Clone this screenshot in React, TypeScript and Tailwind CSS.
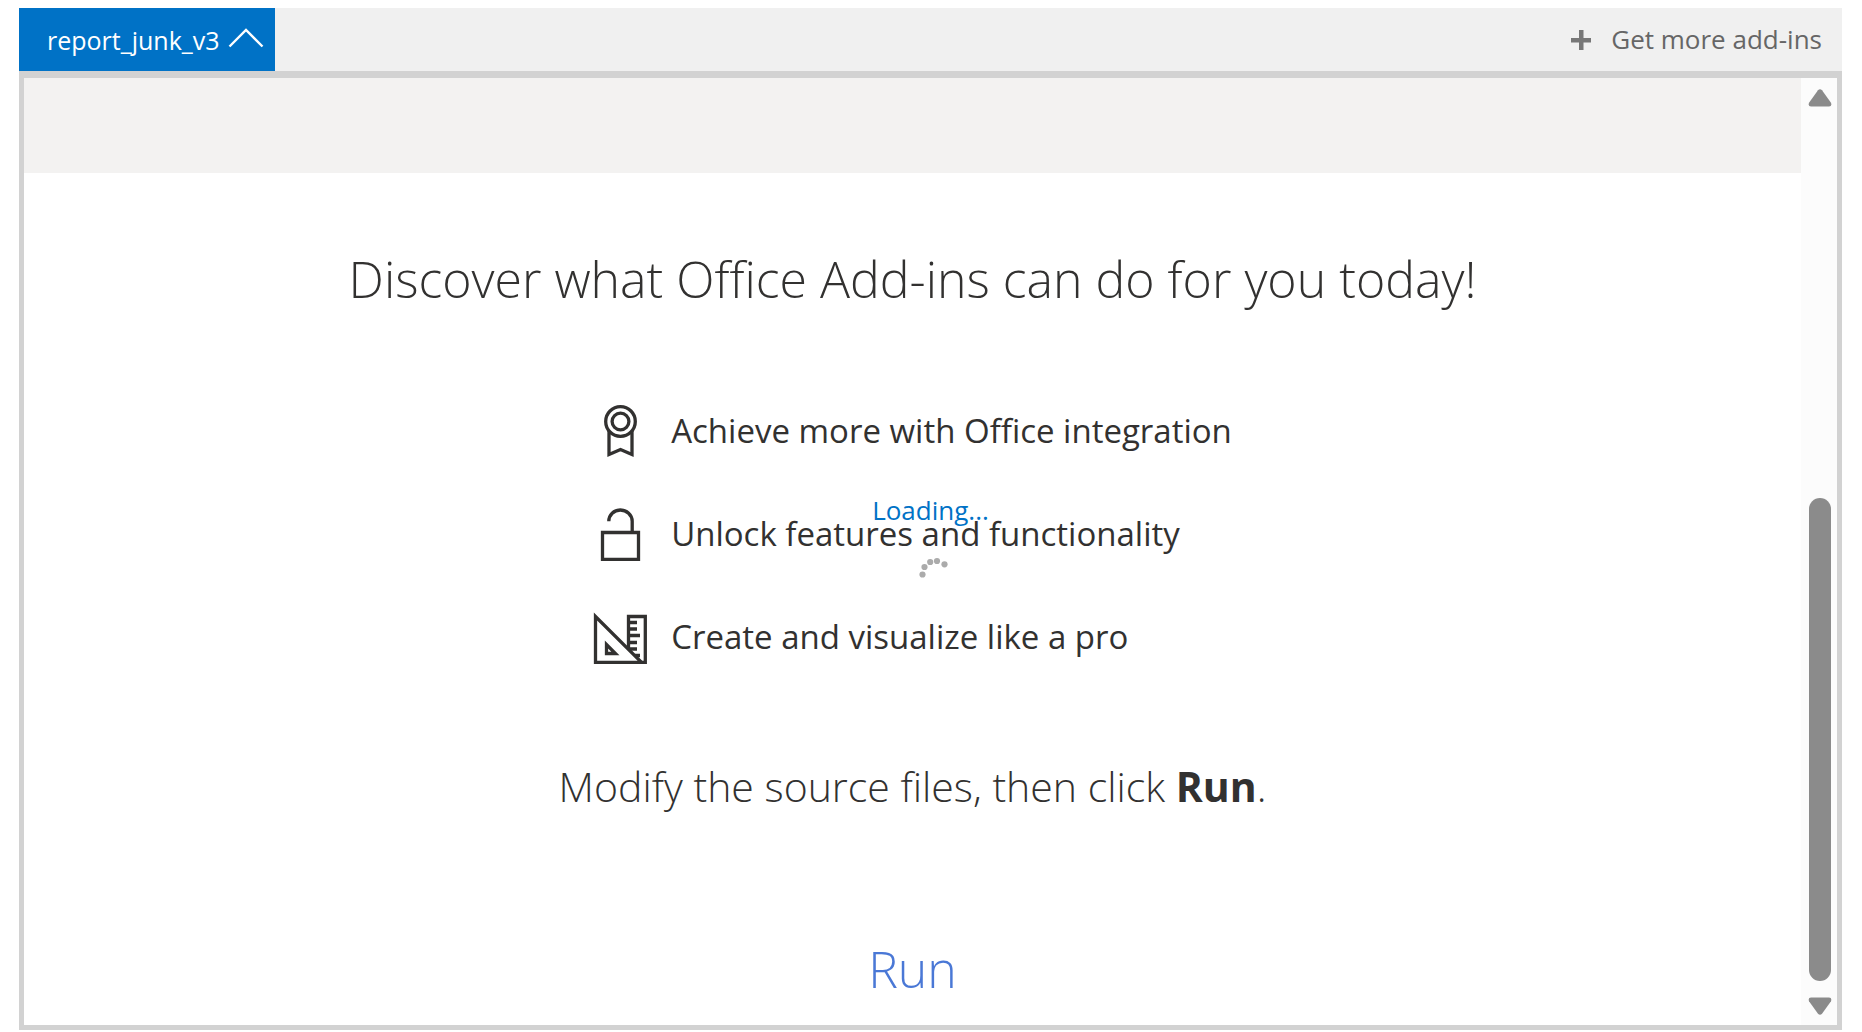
import type { ReactNode } from 'react';

const ICON_PROPS = {
  viewBox: '0 0 54 54',
  className: 'h-[54px] w-[54px] flex-shrink-0',
  fill: 'none',
  stroke: '#323130',
  strokeWidth: 3.3,
  'aria-hidden': true,
} as const;

function RibbonIcon() {
  return (
    <svg {...ICON_PROPS}>
      <circle cx="27.5" cy="17.5" r="14.8" />
      <circle cx="27.5" cy="17.5" r="8.4" />
      <path d="M16 27V50.5L27.5 45.5L39 50.5V27" />
    </svg>
  );
}

function UnlockIcon() {
  return (
    <svg {...ICON_PROPS}>
      <path d="M9.5 25.5H45.5V52.3H9.5Z" />
      <path d="M15.8 14.3C15.8 8 21 3 27.3 3S39.2 8 39.2 14.3V25" />
    </svg>
  );
}

function DesignIcon() {
  return (
    <svg {...ICON_PROPS}>
      <path d="M2.5 6.5V52.3H48.5Z" />
      <path d="M13.5 34.5V43.5H22.5Z" />
      <path d="M35.5 39V6.5H52.3V52.3H47" />
      <path d="M36 12.5H44M36 19H44M36 25.5H47M36 32.5H44M37 39H44M42 45.5H47" />
    </svg>
  );
}

const FEATURES: { icon: () => ReactNode; text: string }[] = [
  { icon: RibbonIcon, text: 'Achieve more with Office integration' },
  { icon: UnlockIcon, text: 'Unlock features and functionality' },
  { icon: DesignIcon, text: 'Create and visualize like a pro' },
];

function ScrollArrow({ label, down = false }: { label: string; down?: boolean }) {
  return (
    <button type="button" aria-label={label}>
      <svg viewBox="0 0 24 18" className={down ? 'h-[18px] w-6 rotate-180' : 'h-[18px] w-6'} aria-hidden="true">
        <path d="M10 1.2Q12 -0.8 14 1.2L23 13.8Q24.2 17.4 21 17.6H3Q-0.2 17.4 1 13.8Z" fill="#8b8b8b" />
      </svg>
    </button>
  );
}

function Loading() {
  return (
    <div role="status" className="pointer-events-none absolute inset-x-0 top-[416px] flex flex-col items-center">
      <span className="text-[26px] leading-8 text-[#0072c6]">Loading...</span>
      <svg viewBox="0 0 40 40" className="mt-[22px] h-10 w-10" fill="#ababab" aria-hidden="true">
        <circle cx="11.5" cy="26.5" r="3.1" />
        <circle cx="13.5" cy="19" r="3.1" />
        <circle cx="19.2" cy="14" r="3.1" />
        <circle cx="26" cy="13" r="3.1" />
        <circle cx="33.5" cy="16.3" r="3.1" />
      </svg>
    </div>
  );
}

export default function App() {
  return (
    <div className="flex min-h-screen flex-col bg-white px-5 pt-2 pb-0.5 pl-[19px] font-['Segoe_UI','Open_Sans',sans-serif] text-[#323130]">
      <header className="flex h-[63px] items-stretch justify-between bg-[#f0f0f0]">
        <button type="button" className="flex items-center gap-2 bg-[#0072c6] pr-[11px] pl-7 text-[25px] leading-8 text-white">
          report_junk_v3
          <svg viewBox="0 0 36 20" className="mb-1 h-5 w-9" fill="none" stroke="currentColor" strokeWidth="2.4" aria-hidden="true">
            <path d="M1.5 18.5L18 2L34.5 18.5" />
          </svg>
        </button>
        <a href="#" className="flex items-center gap-5 pr-5 text-[26px] leading-8 text-[#666666]">
          <svg viewBox="0 0 20 20" className="h-5 w-5" fill="#777777" aria-hidden="true">
            <path d="M8 0H12.5V8H20V12.5H12.5V20H8V12.5H0V8H8Z" />
          </svg>
          <span className="pb-0.5">Get more add-ins</span>
        </a>
      </header>

      <div className="relative flex flex-1 border-5 border-t-7 border-[#d2d2d2]">
        <main className="flex flex-1 flex-col items-center">
          <div className="h-[95px] w-full bg-[#f3f2f1]" />
          <h1 className="mt-[71px] text-[50px] leading-[70px] font-light">
            Discover what Office Add-ins can do for you today!
          </h1>
          <ul className="mt-[90px] space-y-[49px]">
            {FEATURES.map(({ icon: Icon, text }) => (
              <li key={text} className="flex items-center gap-6">
                <Icon />
                <span className="text-[33px] leading-[54px]">{text}</span>
              </li>
            ))}
          </ul>
          <p className="mt-[94px] text-[41px] leading-[56px] font-light">
            Modify the source files, then click <b className="font-bold">Run</b>.
          </p>
          <button type="button" className="mt-[120px] text-[50px] leading-[70px] font-light text-[#4a78d6]">
            Run
          </button>
        </main>

        <div className="flex w-9 flex-col items-center bg-[#fcfcfc] pt-[11px] pb-2.5 pl-0.5">
          <ScrollArrow label="Scroll up" />
          <div className="flex-[391]" />
          <div className="mb-4 w-[22px] flex-[483] rounded-full bg-[#8b8b8b]" />
          <ScrollArrow label="Scroll down" down />
        </div>

        <Loading />
      </div>
    </div>
  );
}
